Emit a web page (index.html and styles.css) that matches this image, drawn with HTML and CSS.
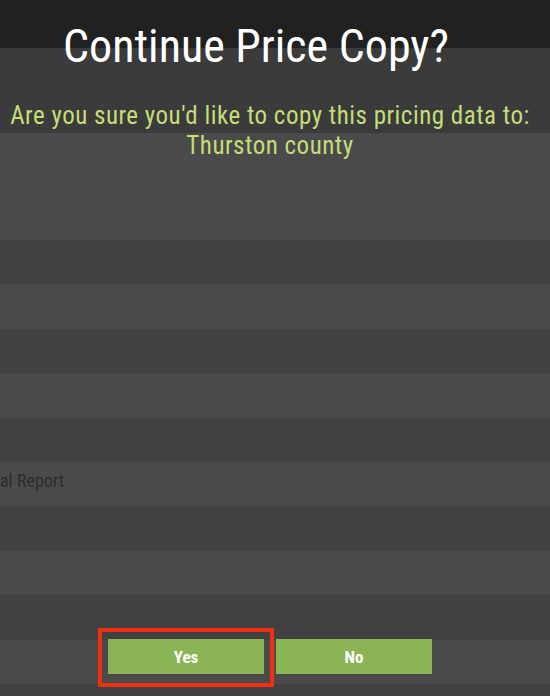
FILE: index.html
```html
<!DOCTYPE html>
<html>
<head>
<meta charset="utf-8">
<link rel="stylesheet" href="styles.css">
</head>
<body>
<div class="page">
  <div class="topbar"></div>
  <div class="band band-a"></div>
  <div class="band band-b"></div>
  <div class="rows">
    <div class="row dark"></div>
    <div class="row light"></div>
    <div class="row dark"></div>
    <div class="row light"></div>
    <div class="row dark"></div>
    <div class="row light"><span class="cell">al Report</span></div>
    <div class="row dark"></div>
    <div class="row light"></div>
    <div class="row dark"></div>
    <div class="row light"></div>
    <div class="row dark"></div>
  </div>

  <div class="modal">
    <h1 class="title">Continue Price Copy?</h1>
    <p class="message">Are you sure you'd like to copy this pricing data to:<br>Thurston county</p>
    <div class="actions">
      <button class="btn btn-yes">Yes</button>
      <button class="btn">No</button>
    </div>
  </div>
</div>
</body>
</html>
```
FILE: styles.css
```css
html, body {
  margin: 0;
  padding: 0;
  width: 550px;
  height: 696px;
  overflow: hidden;
  background: #424242;
}
.page {
  position: relative;
  width: 550px;
  height: 696px;
  font-family: Roboto, "Liberation Sans", sans-serif;
  font-stretch: 75%;
}
.topbar { height: 48px; background: #212121; }
.band-a { height: 85px; background: #3b3b3b; }
.band-b { height: 107px; background: #4a4a4a; }
.rows { display: flex; flex-direction: column; }
.row { height: 44.4px; display: flex; align-items: center; }
.row.dark { background: #424242; }
.row.light { background: #4a4a4a; }
.cell {
  color: #2c2c2c;
  font-size: 18px;
  margin-bottom: 8px;
}
.modal {
  position: absolute;
  left: 0;
  top: 0;
  width: 540px;
  display: flex;
  flex-direction: column;
  align-items: center;
}
.title {
  margin: 18px 0 0 0;
  padding-right: 28px;
  font-weight: 400;
  font-size: 46px;
  line-height: 56px;
  color: #ffffff;
}
.message {
  margin: 27px 0 0 0;
  text-align: center;
  color: #c5dd78;
  font-size: 25px;
  line-height: 30px;
  letter-spacing: 0.5px;
}
.actions {
  margin-top: 478px;
  display: flex;
  gap: 12px;
}
.btn {
  width: 156px;
  height: 35px;
  border: none;
  background: #8bb554;
  color: #ffffff;
  font-family: inherit;
  font-stretch: 75%;
  font-weight: 700;
  font-size: 17px;
  padding: 0;
}
.btn-yes {
  position: relative;
}
.btn-yes::after {
  content: "";
  position: absolute;
  left: -10px;
  right: -10px;
  top: -11px;
  bottom: -13px;
  border: 4px solid #f0300e;
}
```
